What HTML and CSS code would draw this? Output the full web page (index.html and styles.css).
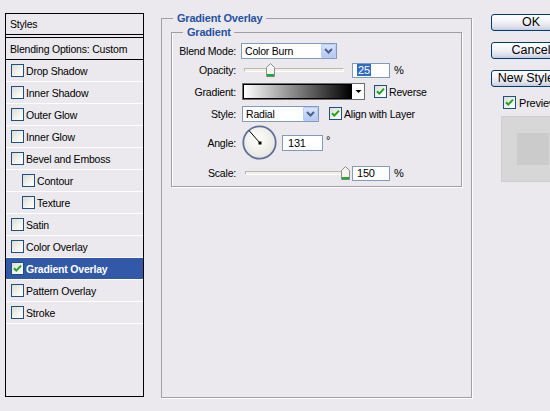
FILE: index.html
```html
<!DOCTYPE html>
<html>
<head>
<meta charset="utf-8">
<link rel="stylesheet" href="styles.css">
</head>
<body>
<div class="dialog">
  <div class="styles-panel">
    <div class="sp-head">Styles</div>
    <div class="sp-blend">Blending Options: Custom</div>
    <div class="sp-item"><span class="cb"></span>Drop Shadow</div>
    <div class="sp-item"><span class="cb"></span>Inner Shadow</div>
    <div class="sp-item"><span class="cb"></span>Outer Glow</div>
    <div class="sp-item"><span class="cb"></span>Inner Glow</div>
    <div class="sp-item"><span class="cb"></span>Bevel and Emboss</div>
    <div class="sp-item sub"><span class="cb"></span>Contour</div>
    <div class="sp-item sub"><span class="cb"></span>Texture</div>
    <div class="sp-item"><span class="cb"></span>Satin</div>
    <div class="sp-item"><span class="cb"></span>Color Overlay</div>
    <div class="sp-item selected"><span class="cb"><svg viewBox="0 0 13 13" width="13" height="13"><path d="M3 6.2 L5.3 8.6 L10 3.6" fill="none" stroke="#21a121" stroke-width="2"/></svg></span>Gradient Overlay</div>
    <div class="sp-item"><span class="cb"></span>Pattern Overlay</div>
    <div class="sp-item"><span class="cb"></span>Stroke</div>
  </div>

  <fieldset class="main">
    <legend>Gradient Overlay</legend>
    <fieldset class="inner">
      <legend>Gradient</legend>
      <div class="form">
        <div class="lbl">Blend Mode:</div>
        <div class="ctl">
          <div class="select blend"><span>Color Burn</span><span class="arrow"><svg viewBox="0 0 15 14" width="15" height="14"><path d="M4 5 L7.5 8.5 L11 5" fill="none" stroke="#4d6185" stroke-width="2"/></svg></span></div>
        </div>

        <div class="lbl">Opacity:</div>
        <div class="ctl">
          <div class="slider op"><div class="track"></div><svg class="thumb" style="left:22px" viewBox="0 0 9 14" width="9" height="14"><path d="M0.5 4.5 L4.5 0.5 L8.5 4.5 L8.5 13.5 L0.5 13.5 Z" fill="#f4f4f0" stroke="#8d8d8d"/><rect x="1" y="11" width="7" height="2.5" fill="#21a838"/></svg></div>
          <div class="num"><span class="sel">25</span></div>
          <span class="unit">%</span>
        </div>

        <div class="lbl">Gradient:</div>
        <div class="ctl">
          <div class="grad"><div class="bar"></div><div class="gdrop"><svg viewBox="0 0 11 15" width="11" height="15"><path d="M2.5 6 L8.5 6 L5.5 9 Z" fill="#000"/></svg></div></div>
          <span class="cb cbl"><svg viewBox="0 0 13 13" width="13" height="13"><path d="M3 6.2 L5.3 8.6 L10 3.6" fill="none" stroke="#21a121" stroke-width="2"/></svg></span><span class="cbtext">Reverse</span>
        </div>

        <div class="lbl">Style:</div>
        <div class="ctl">
          <div class="select style"><span>Radial</span><span class="arrow"><svg viewBox="0 0 15 14" width="15" height="14"><path d="M4 5 L7.5 8.5 L11 5" fill="none" stroke="#4d6185" stroke-width="2"/></svg></span></div>
          <span class="cb cbl2"><svg viewBox="0 0 13 13" width="13" height="13"><path d="M3 6.2 L5.3 8.6 L10 3.6" fill="none" stroke="#21a121" stroke-width="2"/></svg></span><span class="cbtext">Align with Layer</span>
        </div>

        <div class="lbl">Angle:</div>
        <div class="ctl">
          <svg class="dial" viewBox="0 0 36 36" width="36" height="36">
            <defs><radialGradient id="dg" cx="0.45" cy="0.4" r="0.6"><stop offset="0" stop-color="#ffffff"/><stop offset="1" stop-color="#e6e5df"/></radialGradient></defs>
            <circle cx="17.5" cy="17.5" r="16.2" fill="url(#dg)" stroke="#5f7199" stroke-width="1.8"/>
            <line x1="17.5" y1="17.5" x2="7" y2="5.5" stroke="#000" stroke-width="1"/>
            <rect x="16.5" y="16.5" width="3" height="3" fill="#000"/>
          </svg>
          <div class="num angle">131</div>
          <span class="deg">°</span>
        </div>

        <div class="lbl">Scale:</div>
        <div class="ctl">
          <div class="slider sc"><div class="track"></div><svg class="thumb" style="left:96px" viewBox="0 0 9 14" width="9" height="14"><path d="M0.5 4.5 L4.5 0.5 L8.5 4.5 L8.5 13.5 L0.5 13.5 Z" fill="#f4f4f0" stroke="#8d8d8d"/><rect x="1" y="11" width="7" height="2.5" fill="#21a838"/></svg></div>
          <div class="num">150</div>
          <span class="unit">%</span>
        </div>
      </div>
    </fieldset>
  </fieldset>

  <div class="buttons">
    <div class="btn">OK</div>
    <div class="btn">Cancel</div>
    <div class="btn">New Style...</div>
    <div class="preview-row"><span class="cb"><svg viewBox="0 0 13 13" width="13" height="13"><path d="M3 6.2 L5.3 8.6 L10 3.6" fill="none" stroke="#21a121" stroke-width="2"/></svg></span><span class="cbtext">Preview</span></div>
    <div class="preview"><div class="swatch"></div></div>
  </div>
</div>
</body>
</html>
```

FILE: styles.css
```css
* { box-sizing: border-box; }
html, body { margin: 0; padding: 0; }
body {
  width: 550px;
  height: 411px;
  overflow: hidden;
  background: #ebe9ee;
  font-family: "Liberation Sans", Arial, sans-serif;
  font-size: 10.5px;
  letter-spacing: -0.2px;
  color: #000;
}
.dialog {
  display: flex;
  align-items: flex-start;
  padding: 12px 0 0 5px;
}
.dialog > * { flex-shrink: 0; }

/* styles list */
.styles-panel {
  width: 139px;
  height: 384px;
  margin-top: 1px;
  border: 1px solid #000;
  display: flex;
  flex-direction: column;
}
.sp-head {
  height: 21px;
  padding-left: 4px;
  display: flex;
  align-items: center;
  border-bottom: 1px solid #000;
  margin-bottom: 2px;
}
.sp-blend {
  height: 23px;
  padding-left: 4px;
  display: flex;
  align-items: center;
  border-top: 1px solid #000;
  border-bottom: 1px solid #000;
}
.sp-item {
  height: 22px;
  display: flex;
  align-items: center;
  gap: 2px;
  padding-left: 5px;
  border-bottom: 1px solid #fff;
}
.sp-item.sub { padding-left: 16px; }
.sp-item.selected {
  background: #3159a8;
  color: #fff;
  font-weight: bold;
}

/* checkbox */
.cb {
  width: 13px;
  height: 13px;
  border: 1px solid #1c5180;
  background: linear-gradient(135deg, #dcdcd4 0%, #f4f4f0 60%, #ffffff 100%);
  display: inline-flex;
  flex-shrink: 0;
}
.cb svg { margin: -1px; }
.cbtext { margin-left: 2px; }

/* main group */
.main {
  margin: 0 0 0 17px;
  width: 311px;
  height: 386px;
  border: 1px solid #a0a0a0;
  box-shadow: 1px 1px 0 #fff;
  padding: 0 9px;
  min-width: 0;
}
.main > legend,
.inner > legend {
  color: #2552a3;
  font-weight: bold;
  font-size: 11px;
  line-height: 13px;
}
.main > legend { padding: 0 4px; margin-left: 2px; }
.inner {
  margin: 1px 0 0 0;
  width: 291px;
  border: 1px solid #a0a0a0;
  box-shadow: 1px 1px 0 #fff, inset 1px 0 0 #fff;
  padding: 2px 0 2px 0;
  min-width: 0;
}
.inner > legend { margin-left: 11px; padding: 0 3px 0 4px; }

.form {
  display: grid;
  grid-template-columns: 64px 1fr;
  grid-template-rows: 19px 20px 23px 21px 38px 22px;
  column-gap: 6px;
  align-items: center;
}
.lbl { text-align: right; white-space: nowrap; }
.ctl { display: flex; align-items: center; }

/* selects */
.select {
  height: 16px;
  border: 1px solid #7f9db9;
  background: #fff;
  display: flex;
  align-items: center;
  justify-content: space-between;
  padding-left: 3px;
}
.select.blend { width: 96px; margin-left: -1px; }
.select.style { width: 77px; }
.arrow {
  width: 15px;
  height: 14px;
  border: 1px solid #b9cdf4;
  border-radius: 1px;
  background: linear-gradient(#d7e3fc, #b4c8f3);
  display: flex;
}
.arrow svg { margin: -1px; }

/* slider */
.slider {
  position: relative;
  width: 100px;
  height: 14px;
  display: flex;
  align-items: center;
}
.slider.op { margin-left: 2px; }
.slider.sc { margin-left: 3px; width: 99px; }
.track {
  width: 100%;
  height: 4px;
  border: 1px solid #b9b9b0;
  border-bottom-color: #fff;
  border-right-color: #fff;
  background: #f1f0e6;
}
.thumb { position: absolute; top: 0; }

/* number inputs */
.num {
  width: 38px;
  height: 15px;
  border: 1px solid #7f9db9;
  background: #fff;
  padding-left: 4px;
  display: flex;
  align-items: center;
  margin-left: 8px;
  font-size: 11px;
}
.num .sel { background: #316ac5; color: #fff; padding: 0 1px; }
.unit { margin-left: 4px; font-size: 11px; }
.num.angle { width: 41px; height: 16px; margin-left: 4px; padding-left: 5px; }
.deg { margin-left: 3px; align-self: flex-start; margin-top: 9px; font-size: 11px; }

/* gradient */
.grad {
  display: flex;
  height: 17px;
  border: 1px solid #6e6e6e;
  background: #fff;
}
.bar {
  width: 109px;
  border: 1px solid #000;
  background: linear-gradient(90deg, #ffffff, #000000);
}
.gdrop {
  width: 12px;
  display: flex;
  align-items: center;
  justify-content: center;
}
.cbl { margin-left: 9px; }
.cbl2 { margin-left: 10px; }

/* dial */
.dial { display: block; }

/* buttons */
.buttons {
  margin-left: 19px;
  padding-top: 2px;
  display: flex;
  flex-direction: column;
  align-items: flex-start;
}
.btn {
  width: 80px;
  height: 17px;
  border: 1px solid #003c74;
  border-radius: 3px;
  background: linear-gradient(#ffffff 0%, #f3f3f7 45%, #dcdfec 80%, #c4cbe0 100%);
  text-align: center;
  line-height: 15px;
  margin-bottom: 11px;
  font-size: 12.5px;
  letter-spacing: 0;
}
.preview-row {
  display: flex;
  align-items: center;
  margin: -2px 0 0 12px;
  font-size: 11px;
}
.preview-row .cbtext { margin-left: 3px; }
.preview {
  margin: 7px 0 0 10px;
  width: 64px;
  height: 66px;
  background: #d7d7d7;
  border: 1px solid #cdcdcd;
  display: flex;
  align-items: center;
  justify-content: center;
}
.swatch {
  width: 32px;
  height: 32px;
  background: #cbcbcb;
}
```
